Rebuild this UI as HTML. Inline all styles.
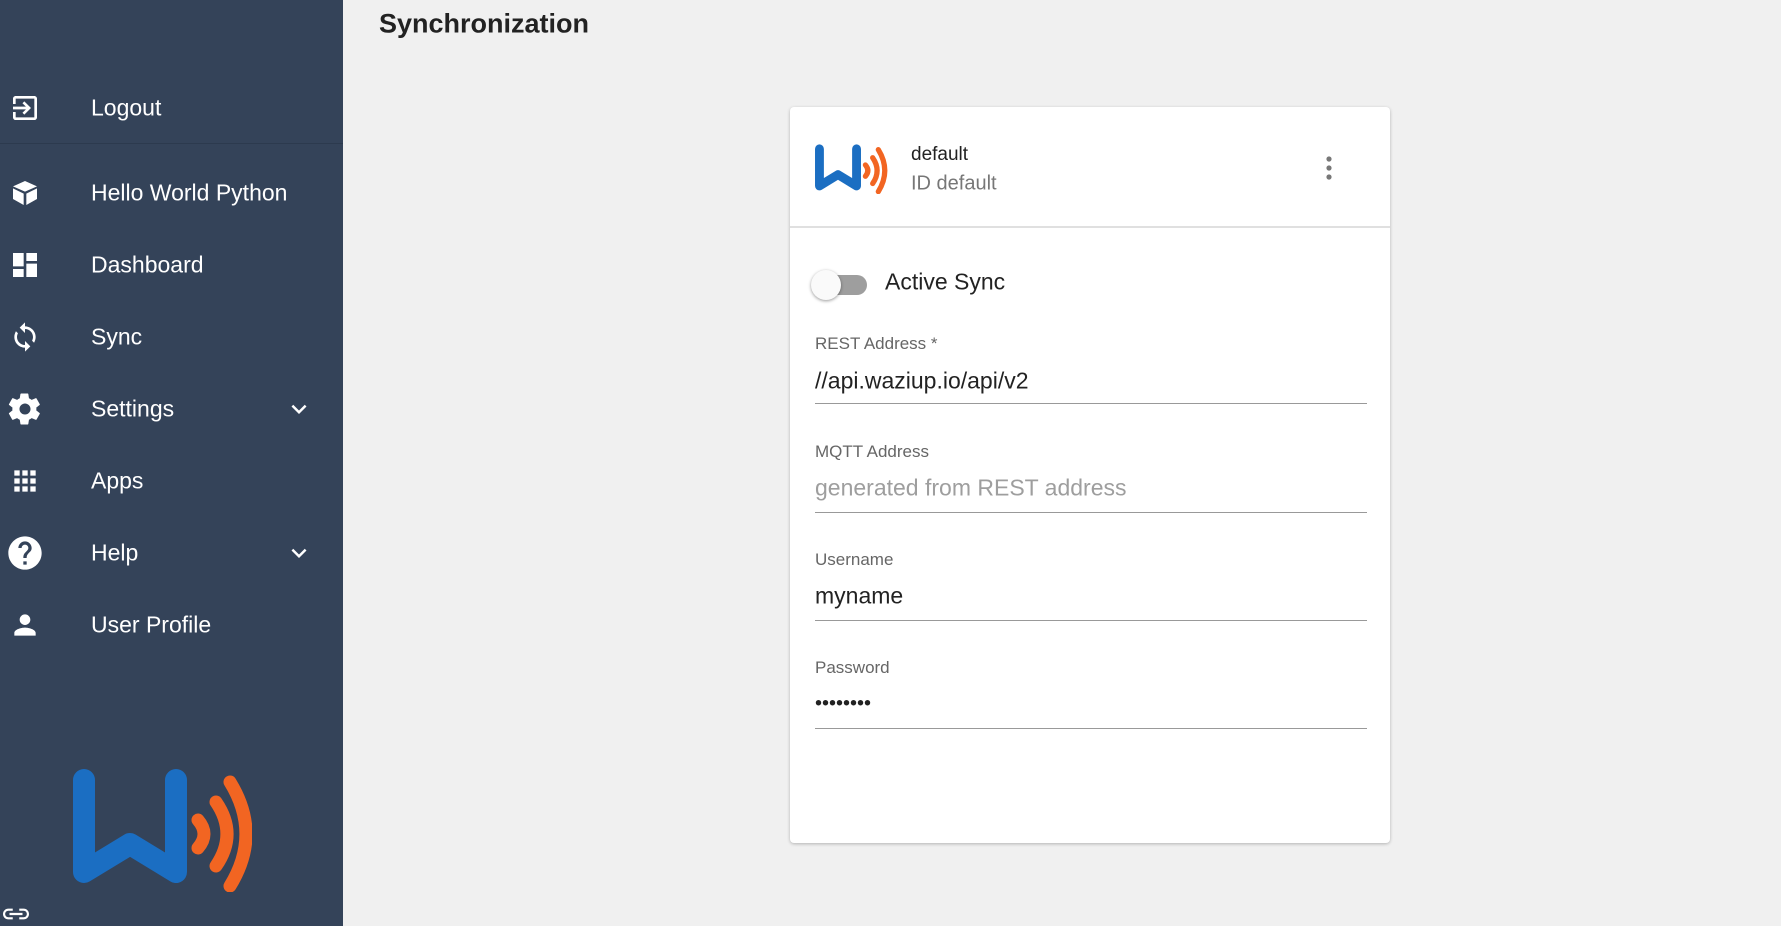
<!DOCTYPE html><html><head><style>
body{margin:0;width:1781px;height:926px;background:#f0f0f0;font-family:"Liberation Sans",sans-serif;position:relative;overflow:hidden}
.sb{position:absolute;left:0;top:0;width:343px;height:926px;background:#344359}
.it{position:absolute;left:91px;color:#fff;font-size:23px;transform:translateY(-50%)}
.ic{position:absolute;left:9px;width:32px;height:32px;transform:translateY(-50%)}
.chev{position:absolute;left:284px;transform:translateY(-50%)}
.card{position:absolute;left:790px;top:107px;width:600px;height:736px;background:#fff;border-radius:4px;box-shadow:0 1px 3px rgba(0,0,0,.25)}
.a{position:absolute;transform:translateY(-50%);white-space:nowrap}
.lb{left:25px;font-size:17px;color:#666}
.vl{left:25px;font-size:23px;color:#222}
.ln{position:absolute;left:25px;width:552px;height:1px;background:#999}
</style></head><body>
<div class="sb">
<svg class="ic" style="top:108px" viewBox="0 0 24 24" fill="#fff"><path d="M10.1 15.6 11.5 17l5-5-5-5-1.4 1.4 2.6 2.6H3v2h9.7l-2.6 2.6zM19 3H5c-1.1 0-2 .9-2 2v4h2V5h14v14H5v-4H3v4c0 1.1.9 2 2 2h14c1.1 0 2-.9 2-2V5c0-1.1-.9-2-2-2z"/></svg>
<div class="it" style="top:108px">Logout</div>
<div style="position:absolute;left:0;top:143px;width:343px;height:1px;background:#2c3a4e"></div>
<svg class="ic" style="top:193px" viewBox="0 0 24 24" fill="#fff"><path d="M12 3 3 7l9 4 9-4zM3 8.5v8L11 21v-8.5zM13 12.5V21l8-4.5v-8z"/></svg>
<div class="it" style="top:193px">Hello World Python</div>
<svg class="ic" style="top:265px" viewBox="0 0 24 24" fill="#fff"><path d="M3 13h8V3H3zm0 8h8v-6H3zm10 0h8V11h-8zm0-18v6h8V3z"/></svg>
<div class="it" style="top:265px">Dashboard</div>
<svg class="ic" style="top:337px" viewBox="0 0 24 24" fill="#fff"><path d="M12 4V1L8 5l4 4V6c3.3 0 6 2.7 6 6 0 1-.3 2-.7 2.8l1.5 1.5C19.5 15 20 13.6 20 12c0-4.4-3.6-8-8-8zm0 14c-3.3 0-6-2.7-6-6 0-1 .3-2 .7-2.8L5.2 7.7C4.5 9 4 10.4 4 12c0 4.4 3.6 8 8 8v3l4-4-4-4z"/></svg>
<div class="it" style="top:337px">Sync</div>
<svg class="ic" style="top:409px;left:6px;width:38px;height:38px" viewBox="0 0 24 24" fill="#fff"><path d="M19.1 12.9c0-.3.1-.6.1-.9s0-.6-.1-.9l2.1-1.6c.2-.1.2-.4.1-.6l-2-3.5c-.1-.2-.4-.3-.6-.2l-2.5 1c-.5-.4-1.1-.7-1.700-1l-.4-2.6c0-.2-.2-.4-.5-.4h-4c-.2 0-.4.2-.5.4l-.4 2.6c-.6.3-1.2.6-1.7 1l-2.5-1c-.2-.1-.5 0-.6.2l-2 3.5c-.1.2-.1.5.1.6l2.1 1.6c0 .3-.1.6-.1.9s0 .6.1.9l-2.1 1.6c-.2.1-.2.4-.1.6l2 3.5c.1.2.4.3.6.2l2.5-1c.5.4 1.1.7 1.7 1l.4 2.6c0 .2.2.4.5.4h4c.3 0 .5-.2.5-.4l.4-2.6c.6-.3 1.2-.6 1.7-1l2.5 1c.2.1.5 0 .6-.2l2-3.5c.1-.2.1-.5-.1-.6zM12 15.5c-1.9 0-3.5-1.6-3.5-3.5s1.6-3.5 3.5-3.5 3.5 1.6 3.5 3.5-1.6 3.5-3.5 3.5z"/></svg>
<div class="it" style="top:409px">Settings</div>
<svg class="chev" style="top:409px" width="30" height="30" viewBox="0 0 24 24" fill="#fff"><path d="M7.4 8.6 12 13.2l4.6-4.6L18 10l-6 6-6-6z"/></svg>
<svg class="ic" style="top:481px" viewBox="0 0 24 24" fill="#fff"><path d="M4 8h4V4H4zm6 12h4v-4h-4zm-6 0h4v-4H4zm0-6h4v-4H4zm6 0h4v-4h-4zm6-10v4h4V4zm-6 4h4V4h-4zm6 6h4v-4h-4zm0 6h4v-4h-4z"/></svg>
<div class="it" style="top:481px">Apps</div>
<svg class="ic" style="top:553px;left:5px;width:40px;height:40px" viewBox="0 0 24 24" fill="#fff"><path d="M12 2C6.5 2 2 6.5 2 12s4.5 10 10 10 10-4.5 10-10S17.5 2 12 2zm1 17h-2v-2h2zm2.1-7.8-.9.9C13.5 12.9 13 13.5 13 15h-2v-.5c0-1.1.4-2.1 1.2-2.8l1.2-1.3c.4-.4.6-.9.6-1.4 0-1.1-.9-2-2-2s-2 .9-2 2H8c0-2.2 1.8-4 4-4s4 1.8 4 4c0 .9-.4 1.7-.9 2.2z"/></svg>
<div class="it" style="top:553px">Help</div>
<svg class="chev" style="top:553px" width="30" height="30" viewBox="0 0 24 24" fill="#fff"><path d="M7.4 8.6 12 13.2l4.6-4.6L18 10l-6 6-6-6z"/></svg>
<svg class="ic" style="top:625px" viewBox="0 0 24 24" fill="#fff"><path d="M12 12c2.2 0 4-1.8 4-4s-1.8-4-4-4-4 1.8-4 4 1.8 4 4 4zm0 2c-2.7 0-8 1.3-8 4v2h16v-2c0-2.7-5.3-4-8-4z"/></svg>
<div class="it" style="top:625px">User Profile</div>
<svg style="position:absolute;left:70px;top:768px" width="182" height="124" viewBox="0 0 182 124">
<path d="M14 12V104L60 76L106 104V12" fill="none" stroke="#1b6ec2" stroke-width="22" stroke-linecap="round" stroke-linejoin="round"/>
<path d="M128 52q12 14 0 28" fill="none" stroke="#f26522" stroke-width="13" stroke-linecap="round"/>
<path d="M146 34q22 32 0 64" fill="none" stroke="#f26522" stroke-width="13" stroke-linecap="round"/>
<path d="M160 14q32 52 0 104" fill="none" stroke="#f26522" stroke-width="13" stroke-linecap="round"/>
</svg>
<svg style="position:absolute;left:3px;top:906px" width="26" height="16" viewBox="0 0 24 14" fill="#fff"><path d="M2 7c0-1.7 1.4-3 3-3h4V2H5C2.2 2 0 4.2 0 7s2.2 5 5 5h4v-2H5c-1.600 0-3-1.3-3-3zm4 1h12V6H6zm13-6h-4v2h4c1.7 0 3 1.3 3 3s-1.3 3-3 3h-4v2h4c2.8 0 5-2.2 5-5s-2.2-5-5-5z"/></svg>
</div>
<div class="a" style="left:379px;top:24px;font-size:27px;font-weight:bold;color:#222">Synchronization</div>
<div class="card">
<svg style="position:absolute;left:23px;top:37px" width="75" height="50" viewBox="0 0 182 124">
<path d="M14 12V104L60 76L106 104V12" fill="none" stroke="#1b6ec2" stroke-width="22" stroke-linecap="round" stroke-linejoin="round"/>
<path d="M128 52q12 14 0 28" fill="none" stroke="#f26522" stroke-width="13" stroke-linecap="round"/>
<path d="M146 34q22 32 0 64" fill="none" stroke="#f26522" stroke-width="13" stroke-linecap="round"/>
<path d="M160 14q32 52 0 104" fill="none" stroke="#f26522" stroke-width="13" stroke-linecap="round"/>
</svg>
<div class="a" style="left:121px;top:48px;font-size:19px;color:#222">default</div>
<div class="a" style="left:121px;top:77px;font-size:20px;color:#777">ID default</div>
<svg style="position:absolute;left:528px;top:47px" width="22" height="28" viewBox="0 0 8 28" fill="#777"><circle cx="4" cy="5" r="2.6"/><circle cx="4" cy="14" r="2.6"/><circle cx="4" cy="23" r="2.6"/></svg>
<div style="position:absolute;left:0;top:119px;width:600px;height:2px;background:#e0e0e0"></div>
<div style="position:absolute;left:29px;top:168px;width:48px;height:20px;border-radius:10px;background:#9e9e9e"></div>
<div style="position:absolute;left:21px;top:163px;width:30px;height:30px;border-radius:50%;background:#fafafa;box-shadow:0 1px 3px rgba(0,0,0,.4)"></div>
<div class="a" style="left:95px;top:175px;font-size:23px;color:#222">Active Sync</div>
<div class="a lb" style="top:237px">REST Address *</div>
<div class="a vl" style="top:274px">//api.waziup.io/api/v2</div>
<div class="ln" style="top:296px"></div>
<div class="a lb" style="top:345px">MQTT Address</div>
<div class="a vl" style="top:381px;color:#9e9e9e">generated from REST address</div>
<div class="ln" style="top:405px"></div>
<div class="a lb" style="top:453px">Username</div>
<div class="a vl" style="top:489px">myname</div>
<div class="ln" style="top:513px"></div>
<div class="a lb" style="top:561px">Password</div>
<div class="a vl" style="top:597px;font-size:20px;letter-spacing:0">••••••••</div>
<div class="ln" style="top:621px"></div>
</div>
</body></html>
